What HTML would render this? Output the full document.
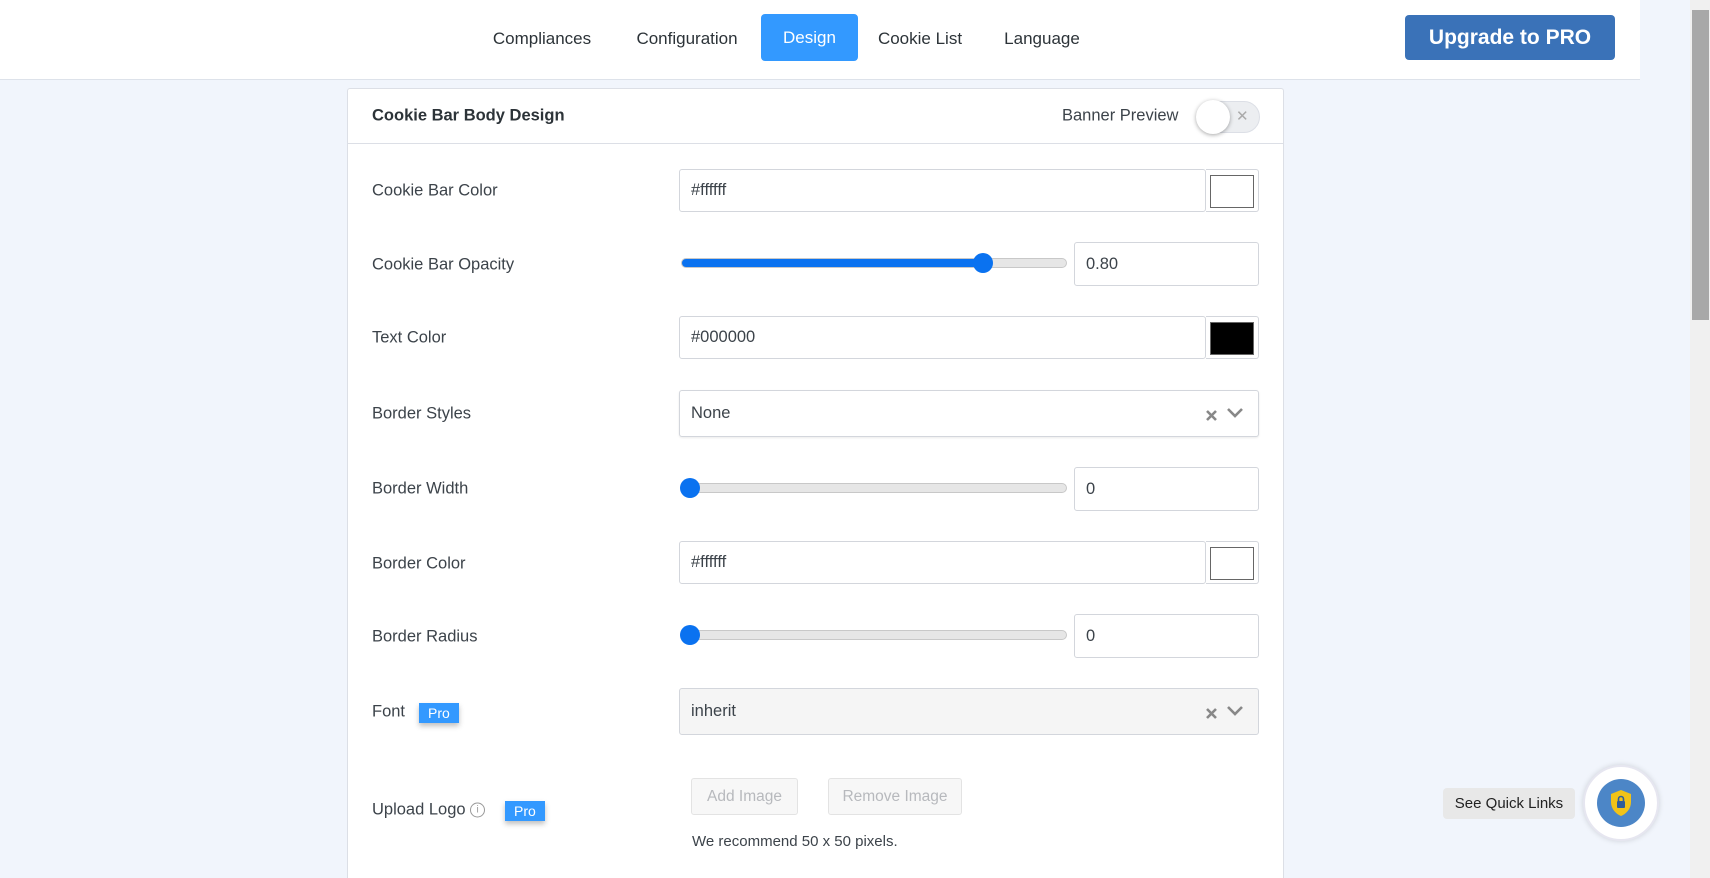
<!DOCTYPE html>
<html style="overflow:hidden;height:878px"><head><meta charset="utf-8"><style>
*{box-sizing:border-box;margin:0;padding:0}
body{width:1710px;height:878px;overflow:hidden;background:#f1f5fc;font-family:"Liberation Sans",sans-serif;position:relative;color:#3c434a}
.a{position:absolute}
.hdr{left:0;top:0;width:1640px;height:80px;background:#fff;border-bottom:1px solid #dde2ea}
.nav{top:29px;font-size:17px;color:#2c3338;transform:translateX(-50%);white-space:nowrap}
.design{left:761px;top:14px;width:97px;height:47px;background:#3399ff;color:#fff;border-radius:4px;font-size:17px;line-height:47px;text-align:center}
.up{left:1405px;top:15px;width:210px;height:45px;background:#3a72b8;color:#fff;border-radius:4px;font-size:21px;font-weight:bold;line-height:45px;text-align:center}
.card{left:347px;top:88px;width:937px;height:790px;background:#fff;border:1px solid #dcdfe6;border-bottom:none;border-radius:3px 3px 0 0}
.ch{left:347px;top:88px;width:937px;height:56px;border-bottom:1px solid #dcdfe6}
.lbl{left:372px;font-size:16.5px;color:#3c434a;transform:translateY(-50%);white-space:nowrap}
.inp{border:1px solid #d3d6dc;border-radius:3px;background:#fff;font-size:16.5px;color:#3c434a;padding-left:11px;display:flex;align-items:center}
.sw{border:1px solid #d3d6dc;border-left:none;border-radius:0 3px 3px 0;background:#fff}
.sw div{position:absolute;left:4px;top:5px;width:44px;height:33px;border:1px solid #666}
.track{height:10px;border:1px solid #c8c8c8;border-radius:5px;background:#e6e6e6}
.thumb{width:20px;height:20px;border-radius:50%;background:#0a72f0}
.pro{background:#3399ff;color:#fff;font-size:14px;padding:2px 9px;box-shadow:0 3px 5px rgba(0,0,0,.25)}
.xv{right:8px;top:14px}
.btn{border:1px solid #e3e3e3;border-radius:3px;background:#f7f7f7;color:#b7b9bd;font-size:15.5px;text-align:center;line-height:36px}
</style></head><body>
<div class="a hdr"></div>
<div class="a nav" style="left:542px">Compliances</div>
<div class="a nav" style="left:687px">Configuration</div>
<div class="a design">Design</div>
<div class="a nav" style="left:920px">Cookie List</div>
<div class="a nav" style="left:1042px">Language</div>
<div class="a up">Upgrade to PRO</div>

<div class="a card"></div>
<div class="a ch"></div>
<div class="a lbl" style="top:116px;font-weight:bold;color:#2c3338">Cookie Bar Body Design</div>
<div class="a lbl" style="left:1062px;top:116px">Banner Preview</div>
<div class="a" style="left:1197px;top:101px;width:63px;height:32px;border-radius:16px;background:#eceef1;border:1px solid #dcdfe6"></div>
<div class="a" style="left:1196px;top:100px;width:34px;height:34px;border-radius:50%;background:#fff;box-shadow:0 1px 4px rgba(0,0,0,.35)"></div>
<div class="a" style="left:1236px;top:107px;color:#aaa;font-size:15px">✕</div>

<div class="a lbl" style="top:191px">Cookie Bar Color</div>
<div class="a inp" style="left:679px;top:169px;width:527px;height:43px">#ffffff</div>
<div class="a sw" style="left:1206px;top:169px;width:53px;height:43px"><div style="background:#fff"></div></div>

<div class="a lbl" style="top:265px">Cookie Bar Opacity</div>
<div class="a track" style="left:681px;top:258px;width:386px;background:linear-gradient(90deg,#0a72f0 0 79%,#e6e6e6 79%)"></div>
<div class="a thumb" style="left:973px;top:253px"></div>
<div class="a inp" style="left:1074px;top:242px;width:185px;height:44px">0.80</div>

<div class="a lbl" style="top:338px">Text Color</div>
<div class="a inp" style="left:679px;top:316px;width:527px;height:43px">#000000</div>
<div class="a sw" style="left:1206px;top:316px;width:53px;height:43px"><div style="background:#000"></div></div>

<div class="a lbl" style="top:414px">Border Styles</div>
<div class="a inp" style="left:679px;top:390px;width:580px;height:47px;box-shadow:0 1px 2px rgba(0,0,0,.08)">None<svg class="a xv" width="48" height="20" viewBox="0 0 48 20"><path d="M5 6 L14 15 M14 6 L5 15" stroke="#888" stroke-width="2.6"/><path d="M26 4 L33 11 L40 4" stroke="#888" stroke-width="2.6" fill="none"/></svg></div>

<div class="a lbl" style="top:489px">Border Width</div>
<div class="a track" style="left:681px;top:483px;width:386px"></div>
<div class="a thumb" style="left:680px;top:478px"></div>
<div class="a inp" style="left:1074px;top:467px;width:185px;height:44px">0</div>

<div class="a lbl" style="top:564px">Border Color</div>
<div class="a inp" style="left:679px;top:541px;width:527px;height:43px">#ffffff</div>
<div class="a sw" style="left:1206px;top:541px;width:53px;height:43px"><div style="background:#fff"></div></div>

<div class="a lbl" style="top:637px">Border Radius</div>
<div class="a track" style="left:681px;top:630px;width:386px"></div>
<div class="a thumb" style="left:680px;top:625px"></div>
<div class="a inp" style="left:1074px;top:614px;width:185px;height:44px">0</div>

<div class="a lbl" style="top:712px">Font</div>
<div class="a pro" style="left:419px;top:703px">Pro</div>
<div class="a inp" style="left:679px;top:688px;width:580px;height:47px;background:#f5f5f5">inherit<svg class="a xv" width="48" height="20" viewBox="0 0 48 20"><path d="M5 6 L14 15 M14 6 L5 15" stroke="#888" stroke-width="2.6"/><path d="M26 4 L33 11 L40 4" stroke="#888" stroke-width="2.6" fill="none"/></svg></div>

<div class="a lbl" style="top:810px">Upload Logo <span style="display:inline-block;width:15px;height:15px;border:1px solid #999;border-radius:50%;font-size:10px;text-align:center;line-height:13px;color:#999;vertical-align:middle">i</span></div>
<div class="a pro" style="left:505px;top:801px">Pro</div>
<div class="a btn" style="left:691px;top:778px;width:107px;height:37px">Add Image</div>
<div class="a btn" style="left:828px;top:778px;width:134px;height:37px">Remove Image</div>
<div class="a" style="left:692px;top:833px;font-size:15px;color:#3c434a">We recommend 50 x 50 pixels.</div>

<div class="a" style="left:1443px;top:788px;width:132px;height:31px;background:#e8e8e8;border-radius:4px;font-size:15px;line-height:31px;text-align:center;color:#222">See Quick Links</div>
<div class="a" style="left:1583px;top:765px;width:76px;height:76px;border-radius:50%;background:#fff;border:2px solid #e6e6f0;box-shadow:0 0 6px rgba(0,0,0,.15)"></div>
<div class="a" style="left:1597px;top:779px;width:48px;height:48px;border-radius:50%;background:#4c86c7"></div>
<svg class="a" style="left:1609px;top:789px" width="24" height="28" viewBox="0 0 24 28"><path d="M12 1 L22 5 V13 C22 20 17 25 12 27 C7 25 2 20 2 13 V5 Z" fill="#f2c318"/><rect x="8" y="12" width="8" height="7" rx="1" fill="#2f5d9a"/><path d="M9.5 12 V10 a2.5 2.5 0 0 1 5 0 V12" stroke="#2f5d9a" stroke-width="1.6" fill="none"/></svg>

<div class="a" style="left:1690px;top:0;width:20px;height:878px;background:#f0f0f0"></div>
<div class="a" style="left:1692px;top:10px;width:17px;height:310px;background:#a8a8a8"></div>
</body></html>
